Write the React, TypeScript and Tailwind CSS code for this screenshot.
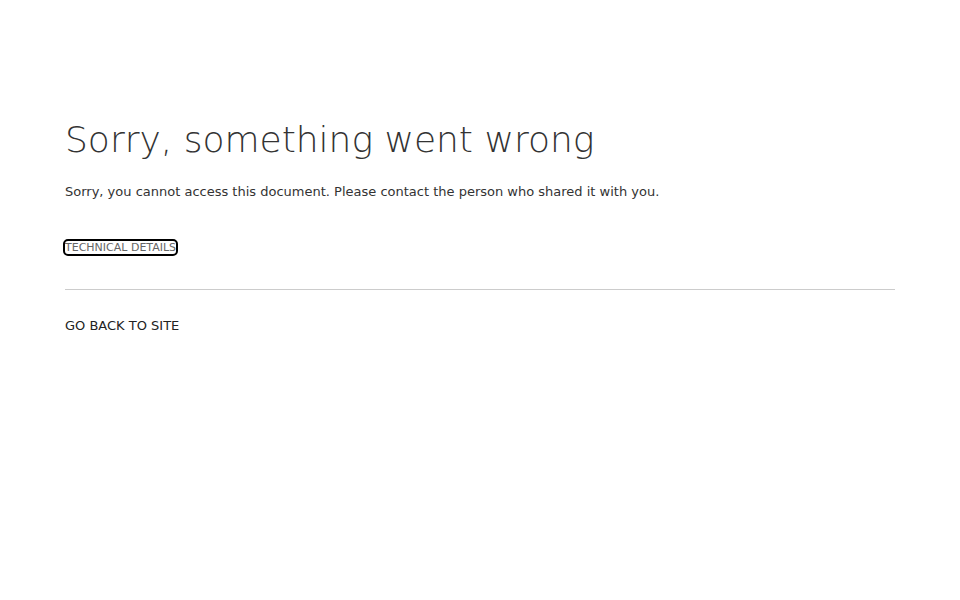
export default function App() {
  return (
    <div className="min-h-[600px] bg-white px-[65px] pt-[118px] font-['DejaVu_Sans',sans-serif]">
      <h1 className="font-['DejaVu_Sans_ExtraLight','DejaVu_Sans',sans-serif] text-[36px] font-extralight leading-[44px] text-[#333]">
        Sorry, something went wrong
      </h1>
      <p className="mt-[21px] text-[13px] leading-[18px] text-[#333]">
        Sorry, you cannot access this document. Please contact the person who shared it with you.
      </p>
      <div className="mt-[40px] flex">
        <button className="rounded-[3px] px-0 text-[11px] leading-[13px] text-[#666] outline-2 outline-black">
          TECHNICAL DETAILS
        </button>
      </div>
      <hr className="mt-[35px] border-t border-[#ccc]" />
      <div className="mt-[23px]">
        <a className="text-[13px] leading-[18px] text-[#222]">GO BACK TO SITE</a>
      </div>
    </div>
  );
}
